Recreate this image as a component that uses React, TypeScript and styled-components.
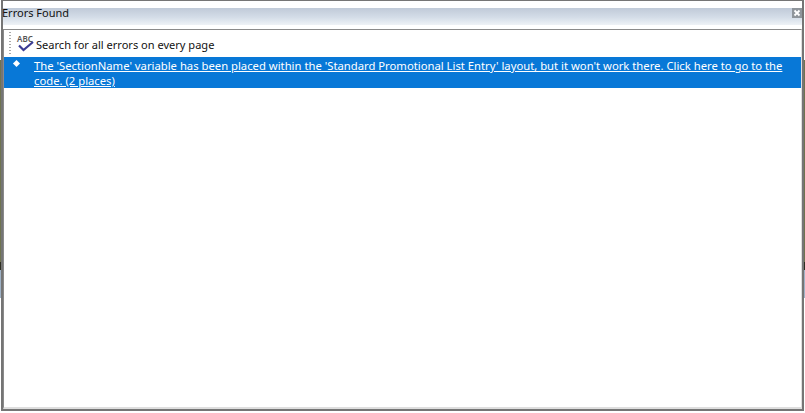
import styled, { createGlobalStyle } from 'styled-components'

const GlobalStyle = createGlobalStyle`
  html, body {
    margin: 0;
    padding: 0;
    overflow: hidden;
  }
  body {
    width: 805px;
    height: 413px;
    /* what is left of the desktop behind the dialog */
    background: linear-gradient(
      180deg,
      #fff 0 60px,
      #6f7350 60px 262px,
      #2e2e22 262px 270px,
      #9fb2c6 270px 298px,
      #fff 298px
    );
  }
`

const App = (): JSX.Element => {
  return (
    <Page>
      <GlobalStyle />
      <Window>
        <Header>
          <Title>Errors Found</Title>
          <CloseBtn>
            <svg width="8" height="8" viewBox="0 0 8 8">
              <path d="M1.5 1.5L6.5 6.5M6.5 1.5L1.5 6.5" stroke="#fff" strokeWidth="1.8" />
            </svg>
          </CloseBtn>
        </Header>
        <Panel>
          <Toolbar>
            <Grip />
            <SpellIcon>
              <AbcText>ABC</AbcText>
              <svg width="17" height="11" viewBox="0 0 17 11">
                <path d="M2 4.5L6.5 9L16 1" fill="none" stroke="#3c3c94" strokeWidth="2.2" />
              </svg>
            </SpellIcon>
            <ToolLabel>Search for all errors on every page</ToolLabel>
          </Toolbar>
          <ErrorRow>
            <Bullet />
            <ErrorLink>
              The 'SectionName' variable has been placed within the 'Standard Promotional List Entry' layout, but it won't work there. Click here to go to the code. (2 places)
            </ErrorLink>
          </ErrorRow>
        </Panel>
      </Window>
    </Page>
  )
}

const Page = styled.div`
  box-sizing: border-box;
  width: 805px;
  height: 413px;
  padding: 0 1px 2px 1px;
`
const Window = styled.div`
  box-sizing: border-box;
  height: 100%;
  padding-top: 7px;
  background: #fff;
  border: 2px solid #757575;
  border-top-width: 1px;
  display: flex;
  flex-direction: column;
  font-family: 'Noto Sans', 'Open Sans', sans-serif;
`
const Header = styled.div`
  height: 17px;
  flex-shrink: 0;
  display: flex;
  align-items: flex-start;
  justify-content: space-between;
  background: linear-gradient(180deg, #c0cad8 0%, #d4dde8 55%, #eef2f6 100%);
`
const Title = styled.div`
  font-size: 11px;
  line-height: 11px;
  margin: -1px 0 0 -1px;
  color: #111;
`
const CloseBtn = styled.div`
  width: 10px;
  height: 10px;
  background: #8f959b;
  display: flex;
  align-items: center;
  justify-content: center;
`
const Panel = styled.div`
  flex: 1;
  margin-top: 4px;
  border-top: 1px solid #8a8a8a;
  border-left: 1px solid #8a8a8a;
  border-bottom: 2px solid #dedede;
  border-right: 1px solid #dedede;
  background: #fff;
  display: flex;
  flex-direction: column;
`
const Toolbar = styled.div`
  height: 27px;
  flex-shrink: 0;
  display: flex;
  align-items: center;
  padding-left: 5px;
`
const Grip = styled.div`
  width: 2px;
  height: 23px;
  margin-right: 6px;
  background: repeating-linear-gradient(180deg, #a8a8a8 0 1px, transparent 1px 3px);
`
const SpellIcon = styled.div`
  position: relative;
  width: 17px;
  height: 17px;
  margin-right: 2px;
  svg {
    position: absolute;
    left: 0;
    bottom: 0;
  }
`
const AbcText = styled.span`
  position: absolute;
  left: 0;
  top: 0;
  font-size: 8px;
  line-height: 8px;
  font-weight: 600;
  color: #555;
`
const ToolLabel = styled.span`
  font-size: 11.05px;
  padding-top: 1px;
  color: #111;
`
const ErrorRow = styled.div`
  background: #0878d7;
  height: 31px;
  flex-shrink: 0;
  display: flex;
  padding: 1px 0 0 10px;
  box-sizing: border-box;
`
const Bullet = styled.div`
  width: 5px;
  height: 5px;
  margin-top: 3px;
  margin-right: 15px;
  flex-shrink: 0;
  background: #fff;
  transform: rotate(45deg);
`
const ErrorLink = styled.a`
  font-size: 11.27px;
  line-height: 15px;
  color: #fff;
  text-decoration: underline;
  width: 755px;
`
export default App
